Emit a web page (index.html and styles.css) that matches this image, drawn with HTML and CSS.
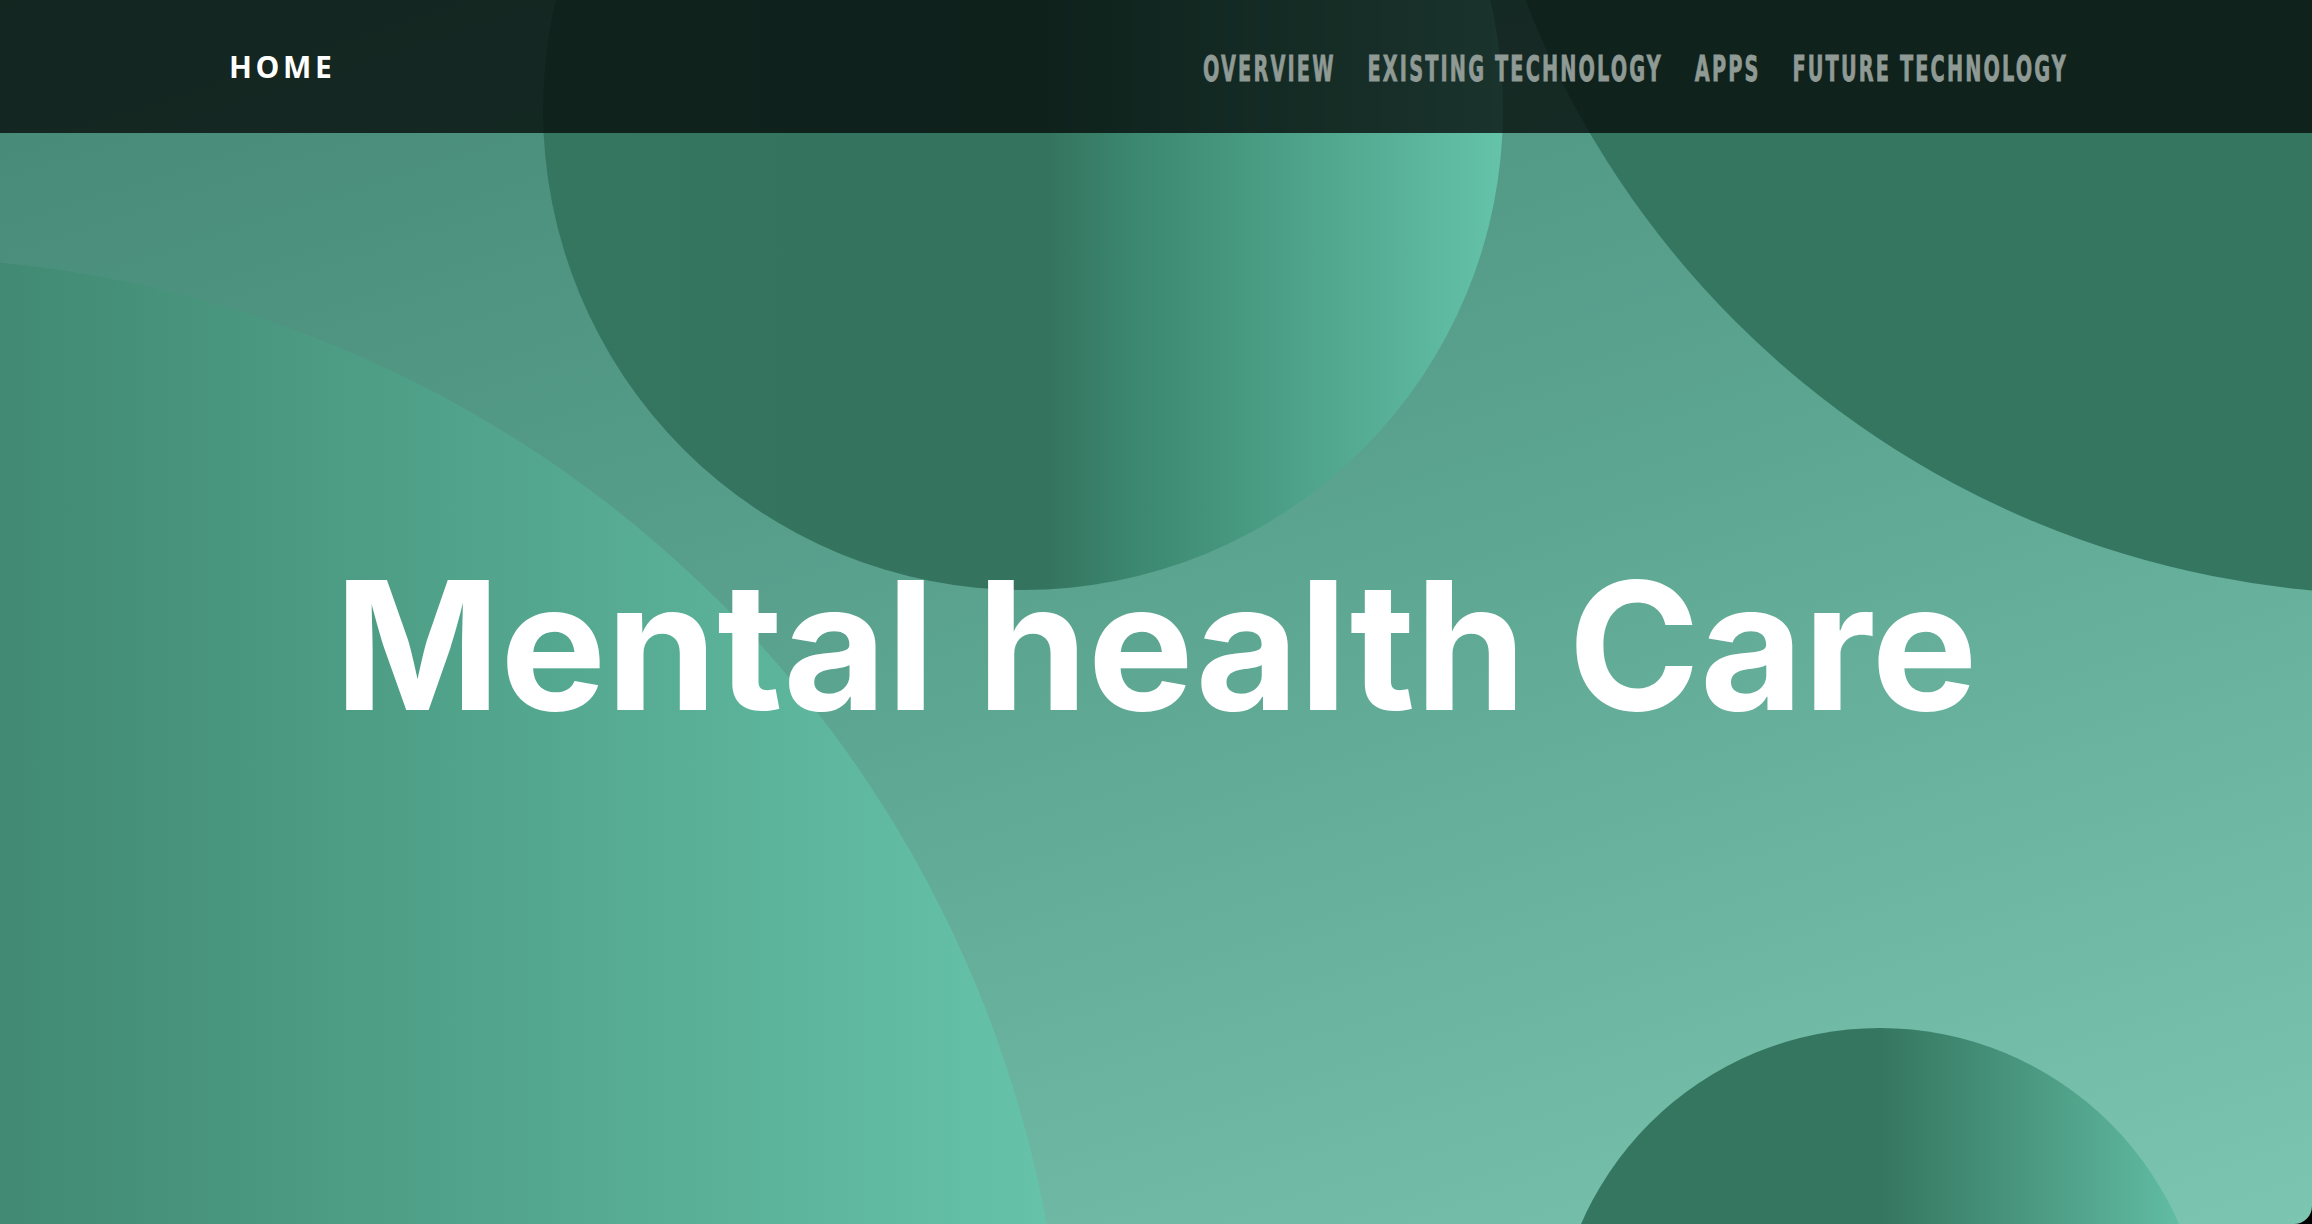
FILE: index.html
```html
<!DOCTYPE html>
<html lang="en">
<head>
<meta charset="utf-8">
<title>Mental health Care</title>
<link rel="stylesheet" href="styles.css">
</head>
<body>
<div class="page">
  <div class="blob blob-left"></div>
  <div class="blob blob-top"></div>
  <div class="blob blob-corner"></div>
  <div class="blob blob-bottom"></div>

  <header class="nav">
    <a class="brand" href="#">HOME</a>
    <ul class="menu">
      <li><a href="#">OVERVIEW</a></li>
      <li><a href="#">EXISTING TECHNOLOGY</a></li>
      <li><a href="#">APPS</a></li>
      <li><a href="#">FUTURE TECHNOLOGY</a></li>
    </ul>
  </header>

  <main class="hero">
    <h1 class="title">Mental health Care</h1>
  </main>
</div>
</body>
</html>
```

FILE: styles.css
```css
html {
  background: #000;
}

body {
  margin: 0;
}

.page {
  position: relative;
  height: 100vh;
  overflow: hidden;
  display: flex;
  flex-direction: column;
  background: linear-gradient(162deg, #448774 0%, #5ca591 50%, #7bc5b1 100%);
  border-bottom-right-radius: 18px;
}

/* decorative circles on the hero canvas */
.blob {
  position: absolute;
  border-radius: 50%;
  z-index: 0;
}

.blob-left {
  left: -1294px;
  top: 257px;
  width: 2360px;
  height: 2360px;
  background: linear-gradient(90deg, #357660 40%, #66c4aa 100%);
}

.blob-top {
  left: 543px;
  top: -370px;
  width: 960px;
  height: 960px;
  background: linear-gradient(90deg, #357660 0%, #34735e 52%, #3c8870 62%, #64c3a9 100%);
}

.blob-corner {
  left: 1462px;
  top: -1270px;
  width: 1864px;
  height: 1864px;
  background: #357660;
}

.blob-bottom {
  left: 1554px;
  top: 1028px;
  width: 652px;
  height: 652px;
  background: linear-gradient(90deg, #357660 0%, #357660 50%, #4a977f 72%, #64c3a9 100%);
}

.nav {
  position: relative;
  z-index: 2;
  height: 133px;
  flex: 0 0 auto;
  display: flex;
  align-items: center;
  justify-content: space-between;
  padding: 0 244px 0 229px;
  background: rgba(5, 10, 9, 0.78);
}

.brand {
  font-family: "Open Sans", "DejaVu Sans", sans-serif;
  font-weight: 700;
  font-size: 30px;
  letter-spacing: 0.12em;
  color: #ffffff;
  text-decoration: none;
}

.menu {
  list-style: none;
  margin: 0;
  padding: 0;
  display: flex;
  gap: 52px;
  transform-origin: right center;
  transform: translateY(2px) scaleX(0.613);
}

.menu a {
  font-family: "DejaVu Sans Condensed", "DejaVu Sans", sans-serif;
  font-stretch: condensed;
  font-weight: 700;
  font-size: 35px;
  letter-spacing: 3.5px;
  color: #8f9a95;
  -webkit-text-stroke: 0.8px #8f9a95;
  text-decoration: none;
  white-space: nowrap;
}

.hero {
  position: relative;
  z-index: 1;
  flex: 1 1 auto;
  display: flex;
  align-items: center;
  justify-content: center;
  padding-bottom: 66px;
}

.title {
  margin: 0;
  font-family: Inter, "Noto Sans", sans-serif;
  font-weight: 700;
  font-size: 178px;
  line-height: 1;
  letter-spacing: 0;
  color: #ffffff;
  white-space: nowrap;
}
```
